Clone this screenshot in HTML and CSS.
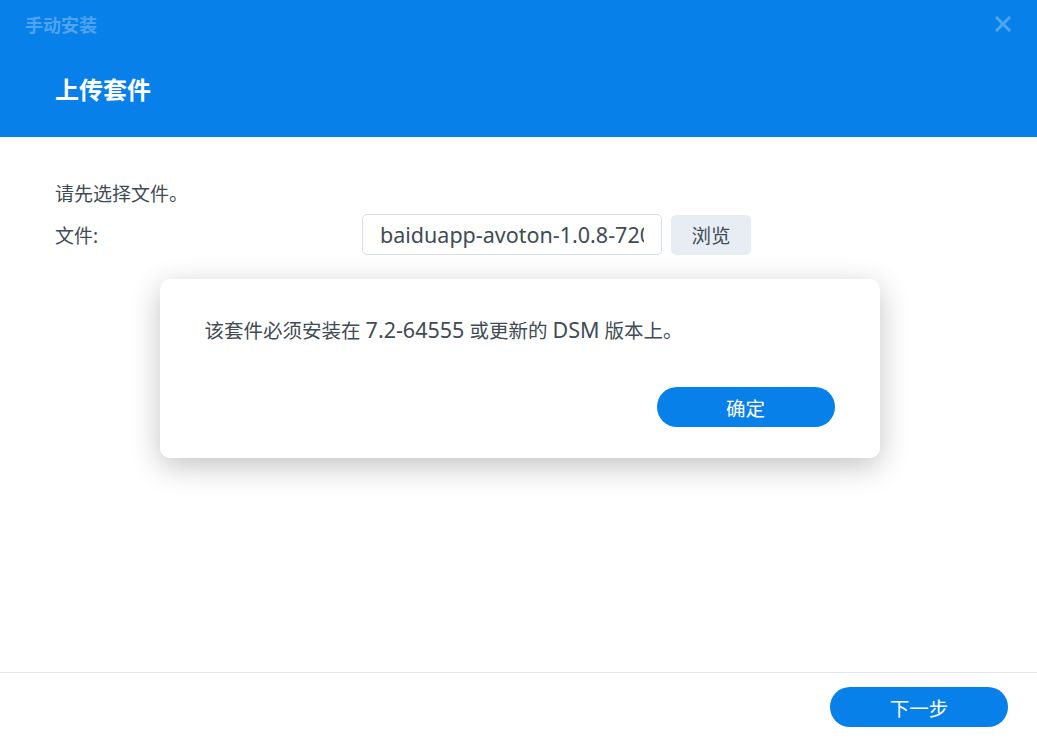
FILE: index.html
```html
<!DOCTYPE html>
<html lang="zh-CN">
<head>
<meta charset="utf-8">
<link rel="stylesheet" href="styles.css">
</head>
<body>
<div class="window">
  <header class="header">
    <div class="topbar">
      <span class="app-title">手动安装</span>
      <svg class="close" width="16" height="16" viewBox="0 0 16 16"><path d="M2 2L14 14M14 2L2 14" stroke="currentColor" stroke-width="3" stroke-linecap="square"/></svg>
    </div>
    <h1 class="step-title">上传套件</h1>
  </header>
  <main class="body">
    <p class="hint">请先选择文件。</p>
    <div class="file-row">
      <label class="file-label">文件:</label>
      <div class="file-input"><span class="file-value">baiduapp-avoton-1.0.8-7200</span></div>
      <button class="browse">浏览</button>
    </div>
  </main>
  <footer class="footer">
    <button class="primary">下一步</button>
  </footer>
</div>
<div class="overlay">
  <div class="dialog">
    <p class="dialog-msg">该套件必须安装在 <span class="lat">7.2-64555</span> 或更新的 <span class="lat">DSM</span> 版本上。</p>
    <div class="dialog-actions">
      <button class="primary">确定</button>
    </div>
  </div>
</div>
</body>
</html>
```
FILE: styles.css
```css
* { box-sizing: border-box; }
html, body { margin: 0; padding: 0; height: 100%; }
body {
  font-family: "Noto Sans", "Noto Sans CJK SC", sans-serif;
  color: #414b55;
  background: #fff;
  overflow: hidden;
}
.window {
  height: 741px;
  display: flex;
  flex-direction: column;
}
.header {
  background: #0780ea;
  height: 137px;
  display: flex;
  flex-direction: column;
}
.topbar {
  height: 48px;
  display: flex;
  align-items: center;
  justify-content: space-between;
  padding: 0 26px 0 25px;
}
.app-title {
  font-size: 18px;
  font-weight: 700;
  color: #4ea4f0;
}
.close { color: #4ea4f0; }
.step-title {
  margin: 18px 0 0 55px;
  font-size: 24px;
  line-height: 48px;
  font-weight: 700;
  color: #fff;
}
.body {
  flex: 1;
  padding: 43px 55px 0;
}
.hint {
  margin: 0;
  font-size: 19px;
  line-height: 28px;
}
.file-row {
  margin-top: 6px;
  display: flex;
  align-items: center;
}
.file-label {
  width: 307px;
  font-size: 19px;
}
.file-input {
  width: 300px;
  height: 41px;
  border: 1px solid #d5dfea;
  border-radius: 5px;
  padding: 0 17px;
  display: flex;
  align-items: center;
}
.file-value {
  flex: 1;
  font-size: 21.5px;
  line-height: 39px;
  white-space: nowrap;
  overflow: hidden;
  color: #414b55;
}
.browse {
  margin-left: 9px;
  width: 80px;
  height: 40px;
  border: none;
  border-radius: 5px;
  background: #e8edf4;
  color: #414b55;
  font-family: inherit;
  font-size: 19.5px;
}
.footer {
  height: 69px;
  border-top: 1px solid #e3e8ee;
  display: flex;
  justify-content: flex-end;
  align-items: center;
  padding: 0 29px 0 0;
}
.primary {
  width: 178px;
  height: 40px;
  border: none;
  border-radius: 20px;
  background: #0780ea;
  color: #fff;
  font-family: inherit;
  font-size: 19.5px;
}
.overlay {
  position: absolute;
  inset: 0;
  display: flex;
  align-items: center;
  justify-content: center;
  padding: 0 0 4px 2px;
}
.dialog {
  width: 720px;
  height: 179px;
  background: #fff;
  border-radius: 10px;
  box-shadow: 0 8px 30px rgba(0,0,0,0.24);
  padding: 37px 45px 31px;
  display: flex;
  flex-direction: column;
  justify-content: space-between;
}
.dialog-msg {
  margin: 0;
  font-size: 19.5px;
  line-height: 28px;
}
.lat { font-size: 21.5px; }
.dialog-actions {
  display: flex;
  justify-content: flex-end;
}
```
